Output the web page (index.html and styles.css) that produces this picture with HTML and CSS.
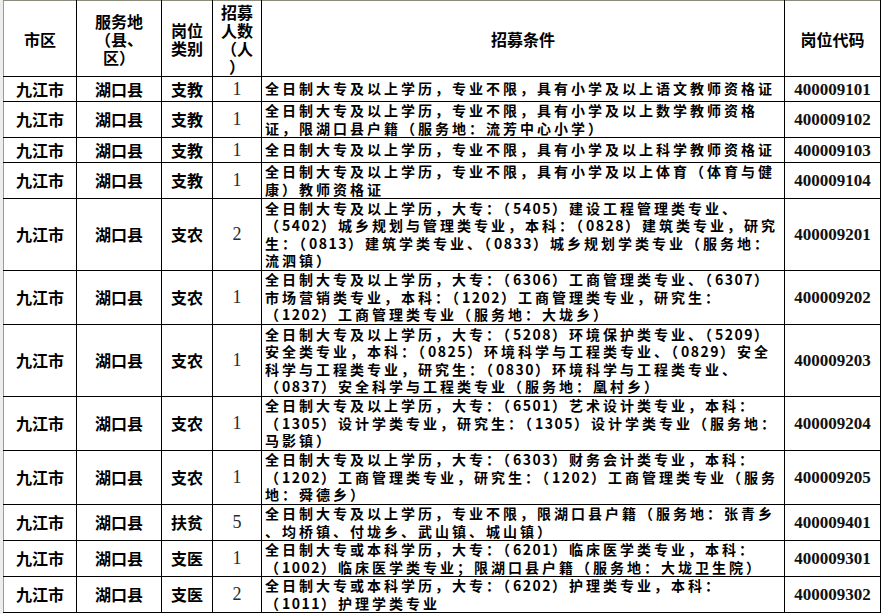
FILE: index.html
```html
<!DOCTYPE html>
<html lang="zh-CN">
<head>
<meta charset="utf-8">
<title>招募岗位表</title>
<link rel="stylesheet" href="styles.css">
</head>
<body>
<div class="sheet">
<table class="grid">
  <colgroup>
    <col class="c-city"><col class="c-county"><col class="c-type"><col class="c-num"><col class="c-cond"><col class="c-code">
  </colgroup>
  <thead>
    <tr class="head">
      <th class="first">市区</th>
      <th>服务地<br>（县、<br>区）</th>
      <th>岗位<br>类别</th>
      <th>招募<br>人数<br>（人<br>）</th>
      <th>招募条件</th>
      <th>岗位代码</th>
    </tr>
  </thead>
  <tbody>
    <tr class="one">
      <td class="first">九江市</td><td>湖口县</td><td>支教</td><td class="num">1</td>
      <td class="cond">全日制大专及以上学历，专业不限，具有小学及以上语文教师资格证</td>
      <td class="code">400009101</td>
    </tr>
    <tr class="two">
      <td class="first">九江市</td><td>湖口县</td><td>支教</td><td class="num">1</td>
      <td class="cond">全日制大专及以上学历，专业不限，具有小学及以上数学教师资格<br>证，限湖口县户籍（服务地：流芳中心小学）</td>
      <td class="code">400009102</td>
    </tr>
    <tr class="one">
      <td class="first">九江市</td><td>湖口县</td><td>支教</td><td class="num">1</td>
      <td class="cond">全日制大专及以上学历，专业不限，具有小学及以上科学教师资格证</td>
      <td class="code">400009103</td>
    </tr>
    <tr class="two">
      <td class="first">九江市</td><td>湖口县</td><td>支教</td><td class="num">1</td>
      <td class="cond">全日制大专及以上学历，专业不限，具有小学及以上体育（体育与健<br>康）教师资格证</td>
      <td class="code">400009104</td>
    </tr>
    <tr class="four">
      <td class="first">九江市</td><td>湖口县</td><td>支农</td><td class="num">2</td>
      <td class="cond">全日制大专及以上学历，大专：（<span class="n">5405</span>）建设工程管理类专业、<br>（<span class="n">5402</span>）城乡规划与管理类专业，本科：（<span class="n">0828</span>）建筑类专业，研究<br>生：（<span class="n">0813</span>）建筑学类专业、（<span class="n">0833</span>）城乡规划学类专业（服务地：<br>流泗镇）</td>
      <td class="code">400009201</td>
    </tr>
    <tr class="three">
      <td class="first">九江市</td><td>湖口县</td><td>支农</td><td class="num">1</td>
      <td class="cond">全日制大专及以上学历，大专：（<span class="n">6306</span>）工商管理类专业、（<span class="n">6307</span>）<br>市场营销类专业，本科：（<span class="n">1202</span>）工商管理类专业，研究生：<br>（<span class="n">1202</span>）工商管理类专业（服务地：大垅乡）</td>
      <td class="code">400009202</td>
    </tr>
    <tr class="four">
      <td class="first mark">九江市</td><td>湖口县</td><td>支农</td><td class="num">1</td>
      <td class="cond">全日制大专及以上学历，大专：（<span class="n">5208</span>）环境保护类专业、（<span class="n">5209</span>）<br>安全类专业，本科：（<span class="n">0825</span>）环境科学与工程类专业、（<span class="n">0829</span>）安全<br>科学与工程类专业，研究生：（<span class="n">0830</span>）环境科学与工程类专业、<br>（<span class="n">0837</span>）安全科学与工程类专业（服务地：凰村乡）</td>
      <td class="code">400009203</td>
    </tr>
    <tr class="three">
      <td class="first">九江市</td><td>湖口县</td><td>支农</td><td class="num">1</td>
      <td class="cond">全日制大专及以上学历，大专：（<span class="n">6501</span>）艺术设计类专业，本科：<br>（<span class="n">1305</span>）设计学类专业，研究生：（<span class="n">1305</span>）设计学类专业（服务地：<br>马影镇）</td>
      <td class="code">400009204</td>
    </tr>
    <tr class="three">
      <td class="first">九江市</td><td>湖口县</td><td>支农</td><td class="num">1</td>
      <td class="cond">全日制大专及以上学历，大专：（<span class="n">6303</span>）财务会计类专业，本科：<br>（<span class="n">1202</span>）工商管理类专业，研究生：（<span class="n">1202</span>）工商管理类专业（服务<br>地：舜德乡）</td>
      <td class="code">400009205</td>
    </tr>
    <tr class="two">
      <td class="first">九江市</td><td>湖口县</td><td>扶贫</td><td class="num">5</td>
      <td class="cond">全日制大专及以上学历，专业不限，限湖口县户籍（服务地：张青乡<br>、均桥镇、付垅乡、武山镇、城山镇）</td>
      <td class="code">400009401</td>
    </tr>
    <tr class="two">
      <td class="first">九江市</td><td>湖口县</td><td>支医</td><td class="num">1</td>
      <td class="cond">全日制大专或本科学历，大专：（<span class="n">6201</span>）临床医学类专业，本科：<br>（<span class="n">1002</span>）临床医学类专业；限湖口县户籍（服务地：大垅卫生院）</td>
      <td class="code">400009301</td>
    </tr>
    <tr class="two">
      <td class="first">九江市</td><td>湖口县</td><td>支医</td><td class="num">2</td>
      <td class="cond">全日制大专或本科学历，大专：（<span class="n">6202</span>）护理类专业，本科：<br>（<span class="n">1011</span>）护理学类专业</td>
      <td class="code">400009302</td>
    </tr>
  </tbody>
</table>
</div>
</body>
</html>
```
FILE: styles.css
```css
html, body {
  margin: 0;
  padding: 0;
  background: #ffffff;
  overflow: hidden;
}

.sheet {
  padding-left: 3px;
  background: linear-gradient(to right, #ededed 0, #ededed 3px, #ffffff 3px);
  min-height: 614px;
}

.grid {
  border-collapse: collapse;
  table-layout: fixed;
  width: 877px;
  font-family: "Noto Sans CJK SC", "Noto Sans", sans-serif;
  color: #000;
  background: #fff;
}

.c-city { width: 73px; }
.c-county { width: 85px; }
.c-type { width: 51px; }
.c-num { width: 49px; }
.c-cond { width: 523px; }
.c-code { width: 96px; }

.grid th,
.grid td {
  border: 1px solid #000;
  padding: 0;
  text-align: center;
  vertical-align: middle;
  font-size: 16px;
  line-height: 17px;
  font-weight: 700;
  overflow: hidden;
  white-space: nowrap;
}

.grid th {
  line-height: 18px;
}

.grid thead th {
  border-top-color: #8c8c7c;
}

.grid .first {
  border-left-color: #9a9a9a;
}

.grid .mark {
  box-shadow: -4px 0 0 #f2b98c;
}

.head { height: 76px; }
.one { height: 25px; }
.two { height: 36px; }
.three { height: 54px; }
.four { height: 72px; }

.grid td.num {
  font-family: "Liberation Serif", serif;
  font-weight: 400;
  font-size: 18px;
  color: #2a2a2a;
}

.grid td.code {
  font-family: "Liberation Serif", serif;
  font-weight: 700;
  font-size: 17px;
  color: #111;
}

.grid td.cond {
  text-align: left;
  font-size: 14px;
  letter-spacing: 3px;
  line-height: 17.5px;
  padding-left: 3px;
}

.grid td.cond .n {
  letter-spacing: 1.5px;
}
```
